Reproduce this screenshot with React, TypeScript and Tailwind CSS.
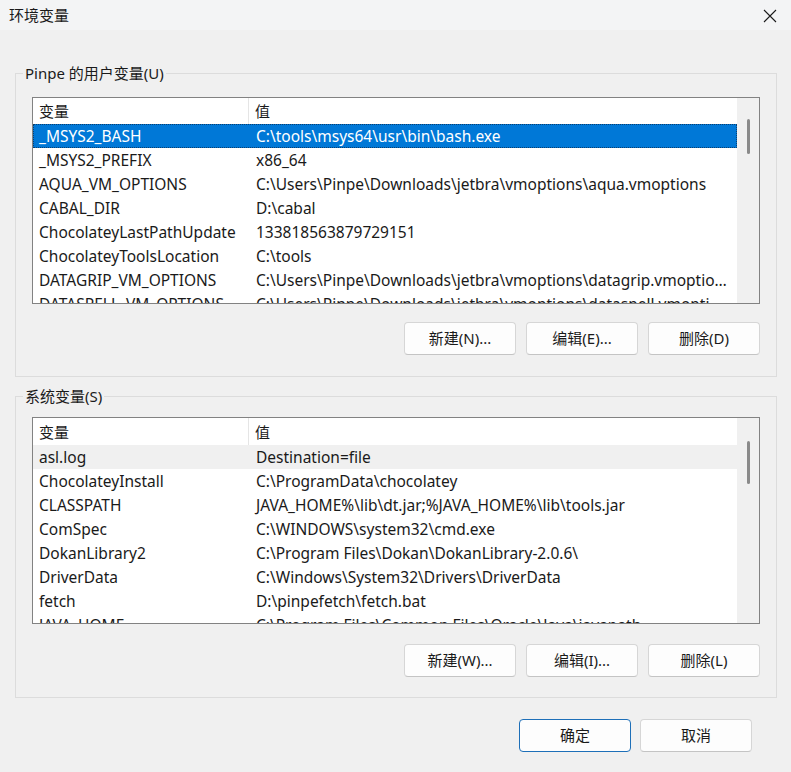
import React from 'react';

type Row = { name: string; value: string };

const userVars: Row[] = [
    { name: '_MSYS2_BASH', value: 'C:\\tools\\msys64\\usr\\bin\\bash.exe' },
    { name: '_MSYS2_PREFIX', value: 'x86_64' },
    { name: 'AQUA_VM_OPTIONS', value: 'C:\\Users\\Pinpe\\Downloads\\jetbra\\vmoptions\\aqua.vmoptions' },
    { name: 'CABAL_DIR', value: 'D:\\cabal' },
    { name: 'ChocolateyLastPathUpdate', value: '133818563879729151' },
    { name: 'ChocolateyToolsLocation', value: 'C:\\tools' },
    { name: 'DATAGRIP_VM_OPTIONS', value: 'C:\\Users\\Pinpe\\Downloads\\jetbra\\vmoptions\\datagrip.vmoptions' },
    { name: 'DATASPELL_VM_OPTIONS', value: 'C:\\Users\\Pinpe\\Downloads\\jetbra\\vmoptions\\dataspell.vmoptions' },
];

const systemVars: Row[] = [
    { name: 'asl.log', value: 'Destination=file' },
    { name: 'ChocolateyInstall', value: 'C:\\ProgramData\\chocolatey' },
    { name: 'CLASSPATH', value: 'JAVA_HOME%\\lib\\dt.jar;%JAVA_HOME%\\lib\\tools.jar' },
    { name: 'ComSpec', value: 'C:\\WINDOWS\\system32\\cmd.exe' },
    { name: 'DokanLibrary2', value: 'C:\\Program Files\\Dokan\\DokanLibrary-2.0.6\\' },
    { name: 'DriverData', value: 'C:\\Windows\\System32\\Drivers\\DriverData' },
    { name: 'fetch', value: 'D:\\pinpefetch\\fetch.bat' },
    { name: 'JAVA_HOME', value: 'C:\\Program Files\\Common Files\\Oracle\\Java\\javapath' },
];

const WinButton: React.FC<{ label: string; primary?: boolean }> = ({ label, primary }) => (
    <button
        type="button"
        className={
            primary
                ? 'w-[112px] h-[33px] rounded-[4px] bg-[#fdfdfd] border border-[#1d6fb8] text-[15px] text-[#1a1a1a]'
                : 'w-[112px] h-[33px] rounded-[4px] bg-[#fdfdfd] border border-[#d6d6d6] border-b-[#c4c4c4] text-[15px] text-[#1a1a1a]'
        }
    >
        {label}
    </button>
);

const VarList: React.FC<{ rows: Row[]; mode: 'selected' | 'hover'; headH: string; thumbTop: string; thumbH: string }> = ({ rows, mode, headH, thumbTop, thumbH }) => (
    <div className="relative w-[728px] h-[207px] border border-[#828282] bg-white overflow-hidden flex text-[15.5px]">
        <div className="w-[704px] flex flex-col">
            <div className={`${headH} flex items-center shrink-0 text-[15px] leading-[20px]`}>
                <div className="w-[216px] h-full pl-[6px] flex items-center border-r border-[#e5e5e5]">变量</div>
                <div className="pl-[6px]">值</div>
            </div>
            {rows.map((r, i) => {
                let cls = 'h-[24px] shrink-0 flex items-center leading-[24px]';
                if (i === 0 && mode === 'selected') cls += ' bg-[#0078d7] text-white outline outline-1 outline-dotted outline-[#0a3f70] -outline-offset-1';
                if (i === 0 && mode === 'hover') cls += ' bg-[#f0f0f0]';
                return (
                    <div key={r.name} className={cls}>
                        <div className="w-[216px] pl-[6px] whitespace-nowrap overflow-hidden">{r.name}</div>
                        <div className="flex-1 min-w-0 pl-[7px] pr-[6px] whitespace-nowrap overflow-hidden text-ellipsis">{r.value}</div>
                    </div>
                );
            })}
        </div>
        <div className="w-[22px] h-full bg-[#f0f0f0] relative">
            <div className={`absolute left-[10px] w-[3px] rounded-full bg-[#8a8a8a] ${thumbTop} ${thumbH}`} />
        </div>
    </div>
);

export default function App() {
    return (
        <div
            className="w-[791px] h-[772px] bg-[#f0f0f0] overflow-hidden text-[15px] text-[#1a1a1a]"
            style={{ fontFamily: '"Segoe UI", "Noto Sans", "Noto Sans CJK SC", sans-serif' }}
        >
            <div className="h-[30px] bg-[#f3f4f5] flex items-center justify-between pl-[9px] pr-[14px]">
                <span className="text-[15px]">环境变量</span>
                <svg width="14" height="14" viewBox="0 0 14 14" className="mt-[1px]">
                    <path d="M1 1 L13 13 M13 1 L1 13" stroke="#1a1a1a" strokeWidth="1.1" />
                </svg>
            </div>

            <fieldset className="ml-[15px] mt-[33px] w-[761px] border border-[#dcdcdc] px-[16px] pb-[21px]">
                <legend className="-ml-[9px] px-[2px] h-[20px] leading-[20px]">Pinpe 的用户变量(U)</legend>
                <div className="mt-[14px]">
                    <VarList rows={userVars} mode="selected" headH="h-[26px]" thumbTop="top-[21px]" thumbH="h-[35px]" />
                </div>
                <div className="mt-[18px] flex justify-end gap-[10px]">
                    <WinButton label="新建(N)..." />
                    <WinButton label="编辑(E)..." />
                    <WinButton label="删除(D)" />
                </div>
            </fieldset>

            <fieldset className="ml-[15px] mt-[9px] w-[761px] border border-[#dcdcdc] px-[16px] pb-[20px]">
                <legend className="-ml-[9px] px-[2px] h-[20px] leading-[20px]">系统变量(S)</legend>
                <div className="mt-[11px]">
                    <VarList rows={systemVars} mode="hover" headH="h-[27px]" thumbTop="top-[23px]" thumbH="h-[43px]" />
                </div>
                <div className="mt-[20px] flex justify-end gap-[10px]">
                    <WinButton label="新建(W)..." />
                    <WinButton label="编辑(I)..." />
                    <WinButton label="删除(L)" />
                </div>
            </fieldset>

            <div className="mt-[21px] flex justify-end gap-[9px] pr-[39px]">
                <WinButton label="确定" primary />
                <WinButton label="取消" />
            </div>
        </div>
    );
}
